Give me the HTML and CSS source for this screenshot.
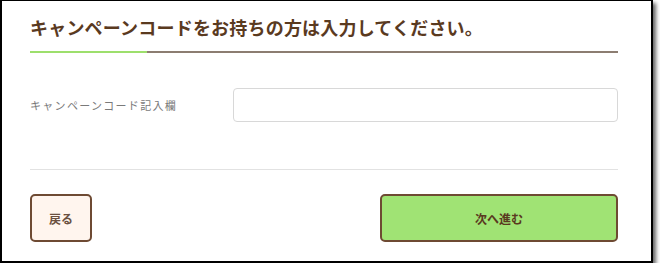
FILE: index.html
```html
<!DOCTYPE html>
<html lang="ja">
<head>
<meta charset="utf-8">
<link rel="stylesheet" href="styles.css">
</head>
<body>
<div class="frame">
  <h1 class="title">キャンペーンコードをお持ちの方は入力してください。</h1>
  <div class="title-rule"></div>
  <div class="field">
    <label class="label" for="code">キャンペーンコード記入欄</label>
    <input class="input" id="code" type="text">
  </div>
  <div class="sep"></div>
  <div class="actions">
    <button class="btn btn-back">戻る</button>
    <button class="btn btn-next">次へ進む</button>
  </div>
</div>
</body>
</html>
```

FILE: styles.css
```css
html, body {
  margin: 0;
  padding: 0;
  background: #ffffff;
}
body {
  font-family: "Noto Sans CJK JP", "Noto Sans", sans-serif;
}
.frame {
  box-sizing: border-box;
  width: 653px;
  height: 263px;
  border: 2px solid #000;
  border-top-width: 1px;
  box-shadow: 3px 3px 4px rgba(0, 0, 0, 0.6);
  padding: 0 33px 0 28px;
  background: #fff;
}
.title {
  margin: 13px 0 0 0;
  font-size: 18px;
  line-height: 27px;
  font-weight: 700;
  color: #5a3a1f;
  letter-spacing: 0.2px;
  white-space: nowrap;
}
.title-rule {
  margin-top: 10px;
  height: 2px;
  background: linear-gradient(to right, #9ddf6c 0, #9ddf6c 117px, #8c7d71 117px, #8c7d71 100%);
}
.field {
  display: flex;
  align-items: center;
  margin-top: 35px;
}
.label {
  width: 203px;
  flex: none;
  font-size: 11px;
  letter-spacing: 1.3px;
  color: #7a7a7a;
}
.input {
  box-sizing: border-box;
  flex: 1;
  height: 34px;
  border: 1px solid #d8d8d8;
  border-radius: 4px;
  background: #fff;
  outline: none;
  margin: 0;
}
.sep {
  margin-top: 47px;
  height: 1px;
  background: #e2e2e2;
}
.actions {
  display: flex;
  justify-content: space-between;
  margin-top: 24px;
}
.btn {
  box-sizing: border-box;
  height: 48px;
  border: 2px solid #6e4a33;
  border-radius: 5px;
  font-family: "Noto Sans CJK JP", "Noto Sans", sans-serif;
  font-size: 12px;
  font-weight: 700;
  color: #5a3a1f;
  padding: 0;
  margin: 0;
}
.btn-back {
  width: 62px;
  background: #fff5ee;
  color: #6a5040;
}
.btn-next {
  width: 238px;
  background: #a0e374;
}
```
